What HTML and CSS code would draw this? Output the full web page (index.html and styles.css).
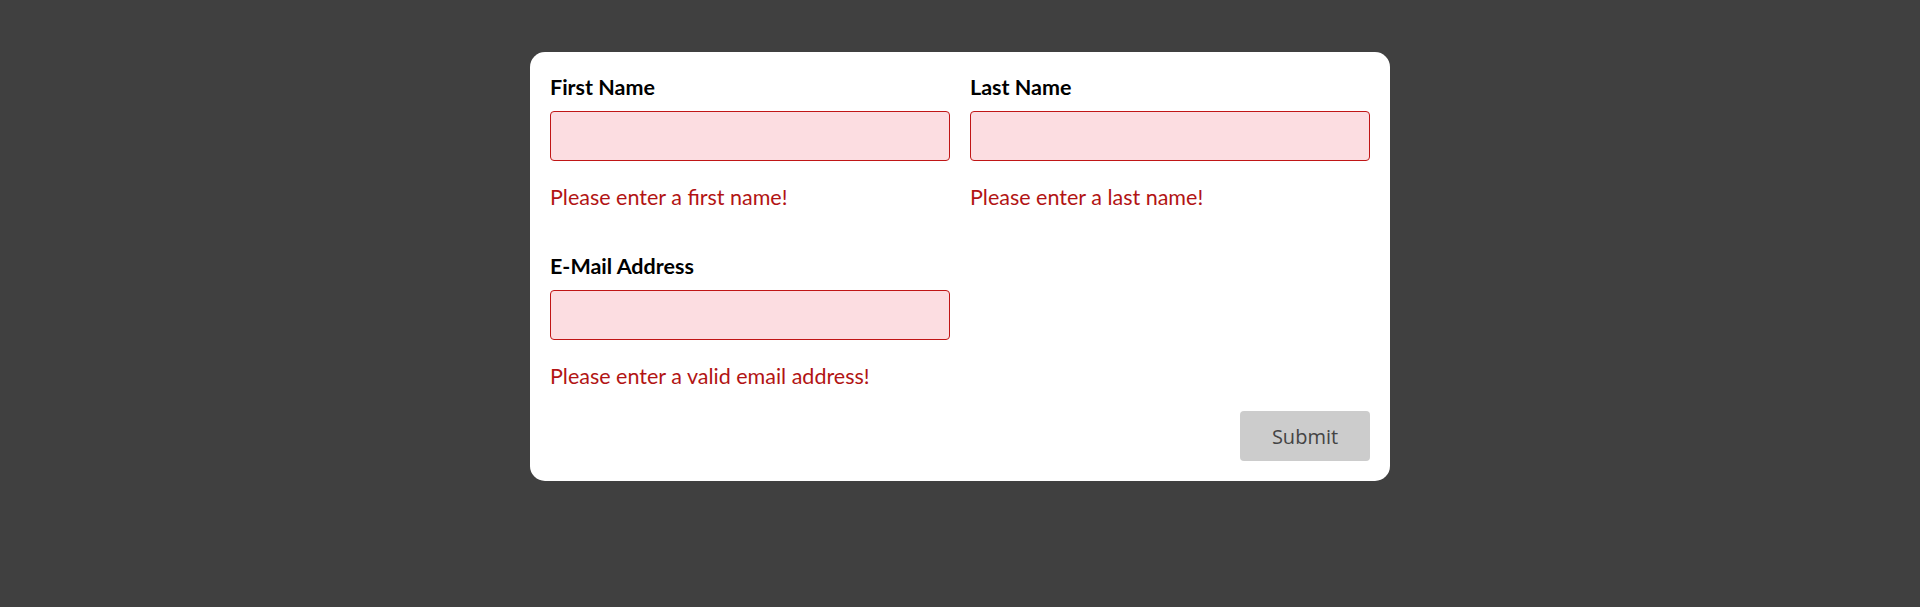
FILE: index.html
```html
<!DOCTYPE html>
<html lang="en">
<head>
<meta charset="utf-8">
<title>Form</title>
<link rel="stylesheet" href="styles.css">
</head>
<body>
<form class="card" novalidate>
  <div class="grid">
    <div class="field">
      <label class="label" for="first">First Name</label>
      <input class="input invalid" id="first" type="text">
      <p class="error">Please enter a first name!</p>
    </div>
    <div class="field">
      <label class="label" for="last">Last Name</label>
      <input class="input invalid" id="last" type="text">
      <p class="error">Please enter a last name!</p>
    </div>
    <div class="field">
      <label class="label" for="email">E-Mail Address</label>
      <input class="input invalid" id="email" type="email">
      <p class="error">Please enter a valid email address!</p>
    </div>
  </div>
  <div class="actions">
    <button class="submit" type="button">Submit</button>
  </div>
</form>
</body>
</html>
```
FILE: styles.css
```css
* { box-sizing: border-box; }

html, body {
  margin: 0;
  padding: 0;
  height: 100%;
}

body {
  background: #404040;
  font-family: "Lato", "Liberation Sans", sans-serif;
}

.card {
  width: 860px;
  margin: 52px auto 0;
  padding: 20px;
  background: #ffffff;
  border-radius: 15px;
}

.grid {
  display: grid;
  grid-template-columns: 400px 400px;
  column-gap: 20px;
  row-gap: 39px;
}

.field {
  display: flex;
  flex-direction: column;
}

.label {
  display: block;
  font-size: 21.5px;
  line-height: 30px;
  font-weight: 700;
  color: #000;
  margin-bottom: 9px;
}

.input {
  display: block;
  width: 100%;
  height: 50px;
  margin: 0;
  padding: 0 12px;
  border: 1px solid #c01616;
  border-radius: 4px;
  background: #fcdde1;
  font: inherit;
  outline: none;
}

.error {
  margin: 21px 0 0;
  font-size: 21.5px;
  line-height: 30px;
  color: #b21414;
}

.actions {
  display: flex;
  justify-content: flex-end;
  margin-top: 20px;
}

.submit {
  width: 130px;
  height: 50px;
  border: none;
  border-radius: 4px;
  background: #cccccc;
  color: #444444;
  font-family: "Open Sans", "Noto Sans", sans-serif;
  font-size: 20px;
  cursor: pointer;
}
```
